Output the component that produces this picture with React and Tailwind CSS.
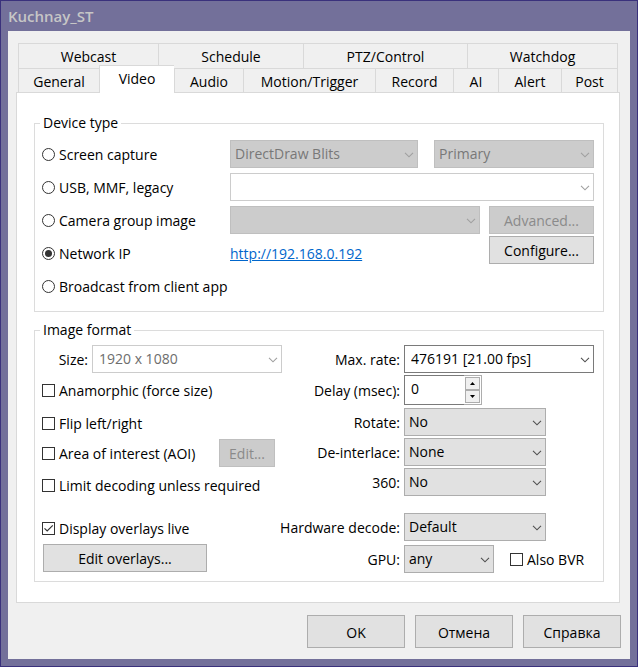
import { useState } from 'react';
import clsx from 'clsx';

const TOP_TABS = ['Webcast', 'Schedule', 'PTZ/Control', 'Watchdog'];
const BOTTOM_TABS = ['General', 'Video', 'Audio', 'Motion/Trigger', 'Record', 'AI', 'Alert', 'Post'];

const SELECT_STYLES = {
    button: 'bg-[#e1e1e1] border-[#adadad] text-black pl-1',
    edit: 'bg-white border-[#7a7a7a] text-black pl-1.5',
    editDisabled: 'bg-white border-[#cccccc] text-[#6d6d6d] pl-1.5',
    disabled: 'bg-[#cccccc] border-[#bfbfbf] text-[#787878] pl-1',
};

function Select({ look = 'button', className, options, ...props }) {
    const faded = look === 'disabled' || look === 'editDisabled';
    return (
        <div className={clsx('relative h-7', className)}>
            <select
                {...props}
                className={clsx('block w-full h-7 pr-6 border appearance-none rounded-none opacity-100', SELECT_STYLES[look])}
            >
                {options.map(o => <option key={o}>{o}</option>)}
            </select>
            <svg
                viewBox="0 0 10 6"
                className={clsx('absolute right-1 top-3 w-2.5 h-1.5 pointer-events-none', faded ? 'text-[#a0a0a0]' : 'text-[#505050]')}
            >
                <path d="M1 0.8 L5 4.8 L9 0.8" fill="none" stroke="currentColor" strokeWidth="1.1" />
            </svg>
        </div>
    );
}

function Radio({ label, className, ...props }) {
    return (
        <label className={clsx('flex items-center gap-1 h-7 whitespace-nowrap', className)}>
            <input
                type="radio"
                name="device"
                {...props}
                className="appearance-none shrink-0 size-[13px] rounded-full border border-[#333333] bg-white grid place-content-center checked:before:block checked:before:size-[7px] checked:before:rounded-full checked:before:bg-[#333333]"
            />
            <span className="pt-0.5">{label}</span>
        </label>
    );
}

function Checkbox({ label, className, ...props }) {
    return (
        <label className={clsx('flex items-center gap-1 h-7 whitespace-nowrap', className)}>
            <span className="relative size-[13px] shrink-0">
                <input type="checkbox" {...props} className="peer appearance-none block size-[13px] border border-[#333333] bg-white" />
                <svg viewBox="0 0 13 13" className="absolute inset-0 hidden peer-checked:block pointer-events-none">
                    <path d="M2.5 6.3 L5.2 9 L10.8 3.4" fill="none" stroke="#333333" strokeWidth="1.2" />
                </svg>
            </span>
            <span className="pt-0.5">{label}</span>
        </label>
    );
}

function Button({ className, children, ...props }) {
    return (
        <button
            type="button"
            {...props}
            className={clsx(
                'border border-[#adadad] bg-[#e1e1e1] text-black text-center whitespace-nowrap pt-0.5 disabled:bg-[#cccccc] disabled:border-[#bfbfbf] disabled:text-[#8a8a8a]',
                className
            )}
        >
            {children}
        </button>
    );
}

function Tab({ name, active, onSelect }) {
    return (
        <button
            type="button"
            role="tab"
            aria-selected={active}
            onClick={() => onSelect(name)}
            className={clsx(
                'border-t border-l border-[#d9d9d9] text-center whitespace-nowrap',
                active ? 'relative h-7 -mt-[3px] pb-0.5 bg-white' : 'h-[25px] pt-0.5'
            )}
        >
            {name}
        </button>
    );
}

function Group({ title, className, children }) {
    return (
        <fieldset className={clsx('border border-[#dcdcdc] pl-[7px] pr-[9px] min-w-0', className)}>
            <legend className="-ml-0.5 px-[3px] leading-5">{title}</legend>
            {children}
        </fieldset>
    );
}

// label + control line in the right half of "Image format"
function Field({ id, label, className, children }) {
    return (
        <div className={clsx('grid grid-cols-[1fr_190px] gap-1 items-center', className)}>
            <label htmlFor={id} className="flex justify-end min-w-0 whitespace-nowrap pt-0.5">{label}</label>
            {children}
        </div>
    );
}

function SpinButton({ label, path, onClick }) {
    return (
        <button
            type="button"
            aria-label={label}
            onClick={onClick}
            className="flex-1 border border-[#adadad] bg-[#f0f0f0] flex items-center justify-center"
        >
            <svg viewBox="0 0 5 3" className="w-[5px] h-[3px]"><path d={path} /></svg>
        </button>
    );
}

export default function App() {
    const [tab, setTab] = useState('Video');
    const [device, setDevice] = useState('network');
    const [delay, setDelay] = useState(0);

    const radio = (value) => ({
        value,
        checked: device === value,
        onChange: () => setDevice(value),
    });

    return (
        <div className="border border-[#3a317c] bg-[#73709a] px-[7px] pb-[7px] font-['Open_Sans','Noto_Sans',sans-serif] text-[14px] leading-5 text-black">
            <header className="h-[30px] flex items-center text-[15px] font-semibold text-[#c6c6c6]">
                <h1>Kuchnay_ST</h1>
            </header>

            <main className="bg-[#f0f0f0] pt-3 pl-2 pr-2.5 pb-[11px]">
                <div role="tablist" className="pl-0.5 pr-0.5">
                    <div className="grid grid-cols-[140fr_145fr_164fr_150fr] border-r border-[#d9d9d9]">
                        {TOP_TABS.map(t => <Tab key={t} name={t} active={t === tab} onSelect={setTab} />)}
                    </div>
                    <div className="grid grid-cols-[81fr_75fr_69fr_132fr_78fr_45fr_63fr_56fr] border-r border-[#d9d9d9] -mb-px">
                        {BOTTOM_TABS.map(t => <Tab key={t} name={t} active={t === tab} onSelect={setTab} />)}
                    </div>
                </div>

                <section className="bg-white border border-[#d9d9d9] pt-5 pb-5 pl-[17px] pr-[15px] flex flex-col gap-2">
                    <Group title="Device type" className="pt-[7px] pb-[11px]">
                        <div className="flex flex-col gap-[5px]">
                            <div className="flex">
                                <Radio label="Screen capture" className="w-[188px]" {...radio('screen')} />
                                <div className="flex-1 flex gap-4">
                                    <Select look="disabled" disabled aria-label="Capture method" options={['DirectDraw Blits']} className="flex-1" />
                                    <Select look="disabled" disabled aria-label="Monitor" options={['Primary']} className="w-40" />
                                </div>
                            </div>
                            <div className="flex">
                                <Radio label="USB, MMF, legacy" className="w-[188px]" {...radio('usb')} />
                                <Select look="editDisabled" disabled aria-label="USB device" options={['']} className="flex-1" />
                            </div>
                            <div className="flex gap-[9px]">
                                <div className="flex-1 flex flex-col gap-[5px]">
                                    <div className="flex">
                                        <Radio label="Camera group image" className="w-[188px]" {...radio('group')} />
                                        <Select look="disabled" disabled aria-label="Camera group" options={['']} className="flex-1" />
                                    </div>
                                    <div className="flex items-center">
                                        <Radio label="Network IP" className="w-[188px]" {...radio('network')} />
                                        <a href="http://192.168.0.192" className="pt-0.5 text-[#0066cc] underline">http://192.168.0.192</a>
                                    </div>
                                </div>
                                <div className="w-[105px] flex flex-col gap-0.5">
                                    <Button disabled className="h-7">Advanced...</Button>
                                    <Button className="h-7">Configure...</Button>
                                </div>
                            </div>
                            <Radio label="Broadcast from client app" {...radio('broadcast')} />
                        </div>
                    </Group>

                    <Group title="Image format" className="pt-[5px] pb-2">
                        <div className="flex">
                            <div className="w-60 flex flex-col">
                                <div className="flex items-center gap-1 pl-4">
                                    <label htmlFor="size" className="w-[30px] text-right pt-0.5">Size:</label>
                                    <Select id="size" look="editDisabled" disabled options={['1920 x 1080']} className="w-[190px] shrink-0" />
                                </div>
                                <Checkbox label="Anamorphic (force size)" className="mt-[3px]" />
                                <Checkbox label="Flip left/right" className="mt-[5px]" />
                                <div className="mt-0.5 flex justify-between pr-[7px]">
                                    <Checkbox label="Area of interest (AOI)" />
                                    <Button disabled className="w-14 h-7">Edit...</Button>
                                </div>
                                <Checkbox label="Limit decoding unless required" className="mt-1" />
                                <Checkbox label="Display overlays live" defaultChecked className="mt-[15px]" />
                                <Button className="mt-0.5 ml-px w-[164px] h-7">Edit overlays...</Button>
                            </div>

                            <div className="flex-1 min-w-0 flex flex-col">
                                <Field id="rate" label="Max. rate:">
                                    <Select id="rate" look="edit" options={['476191 [21.00 fps]']} />
                                </Field>
                                <Field id="delay" label="Delay (msec):" className="mt-0.5">
                                    <div className="w-[78px] h-[30px] flex">
                                        <input
                                            id="delay"
                                            type="text"
                                            value={delay}
                                            onChange={e => setDelay(Number(e.target.value) || 0)}
                                            className="flex-1 min-w-0 pl-1.5 pb-0.5 border border-r-0 border-[#7a7a7a] bg-white outline-none"
                                        />
                                        <div className="w-[18px] flex flex-col p-px border border-l-0 border-[#adadad] bg-white">
                                            <SpinButton label="Increase" path="M0 3 L2.5 0 L5 3 Z" onClick={() => setDelay(delay + 1)} />
                                            <SpinButton label="Decrease" path="M0 0 L2.5 3 L5 0 Z" onClick={() => setDelay(Math.max(0, delay - 1))} />
                                        </div>
                                    </div>
                                </Field>
                                <Field id="rotate" label="Rotate:" className="mt-[3px]">
                                    <Select id="rotate" options={['No', '90', '180', '270']} className="w-[142px]" />
                                </Field>
                                <Field id="deinterlace" label="De-interlace:" className="mt-0.5">
                                    <Select id="deinterlace" options={['None']} className="w-[142px]" />
                                </Field>
                                <Field id="pano" label="360:" className="mt-0.5">
                                    <Select id="pano" options={['No', 'Yes']} className="w-[142px]" />
                                </Field>
                                <Field id="hardware" label="Hardware decode:" className="mt-[17px]">
                                    <Select id="hardware" options={['Default']} className="w-[142px]" />
                                </Field>
                                <Field id="gpu" label="GPU:" className="mt-1">
                                    <div className="flex gap-4">
                                        <Select id="gpu" options={['any']} className="w-[90px]" />
                                        <Checkbox label="Also BVR" />
                                    </div>
                                </Field>
                            </div>
                        </div>
                    </Group>
                </section>

                <footer className="mt-3 -mr-px flex justify-end gap-2.5">
                    <Button className="w-[98px] h-[33px]">OK</Button>
                    <Button className="w-[98px] h-[33px]">Отмена</Button>
                    <Button className="w-[98px] h-[33px]">Справка</Button>
                </footer>
            </main>
        </div>
    );
}
